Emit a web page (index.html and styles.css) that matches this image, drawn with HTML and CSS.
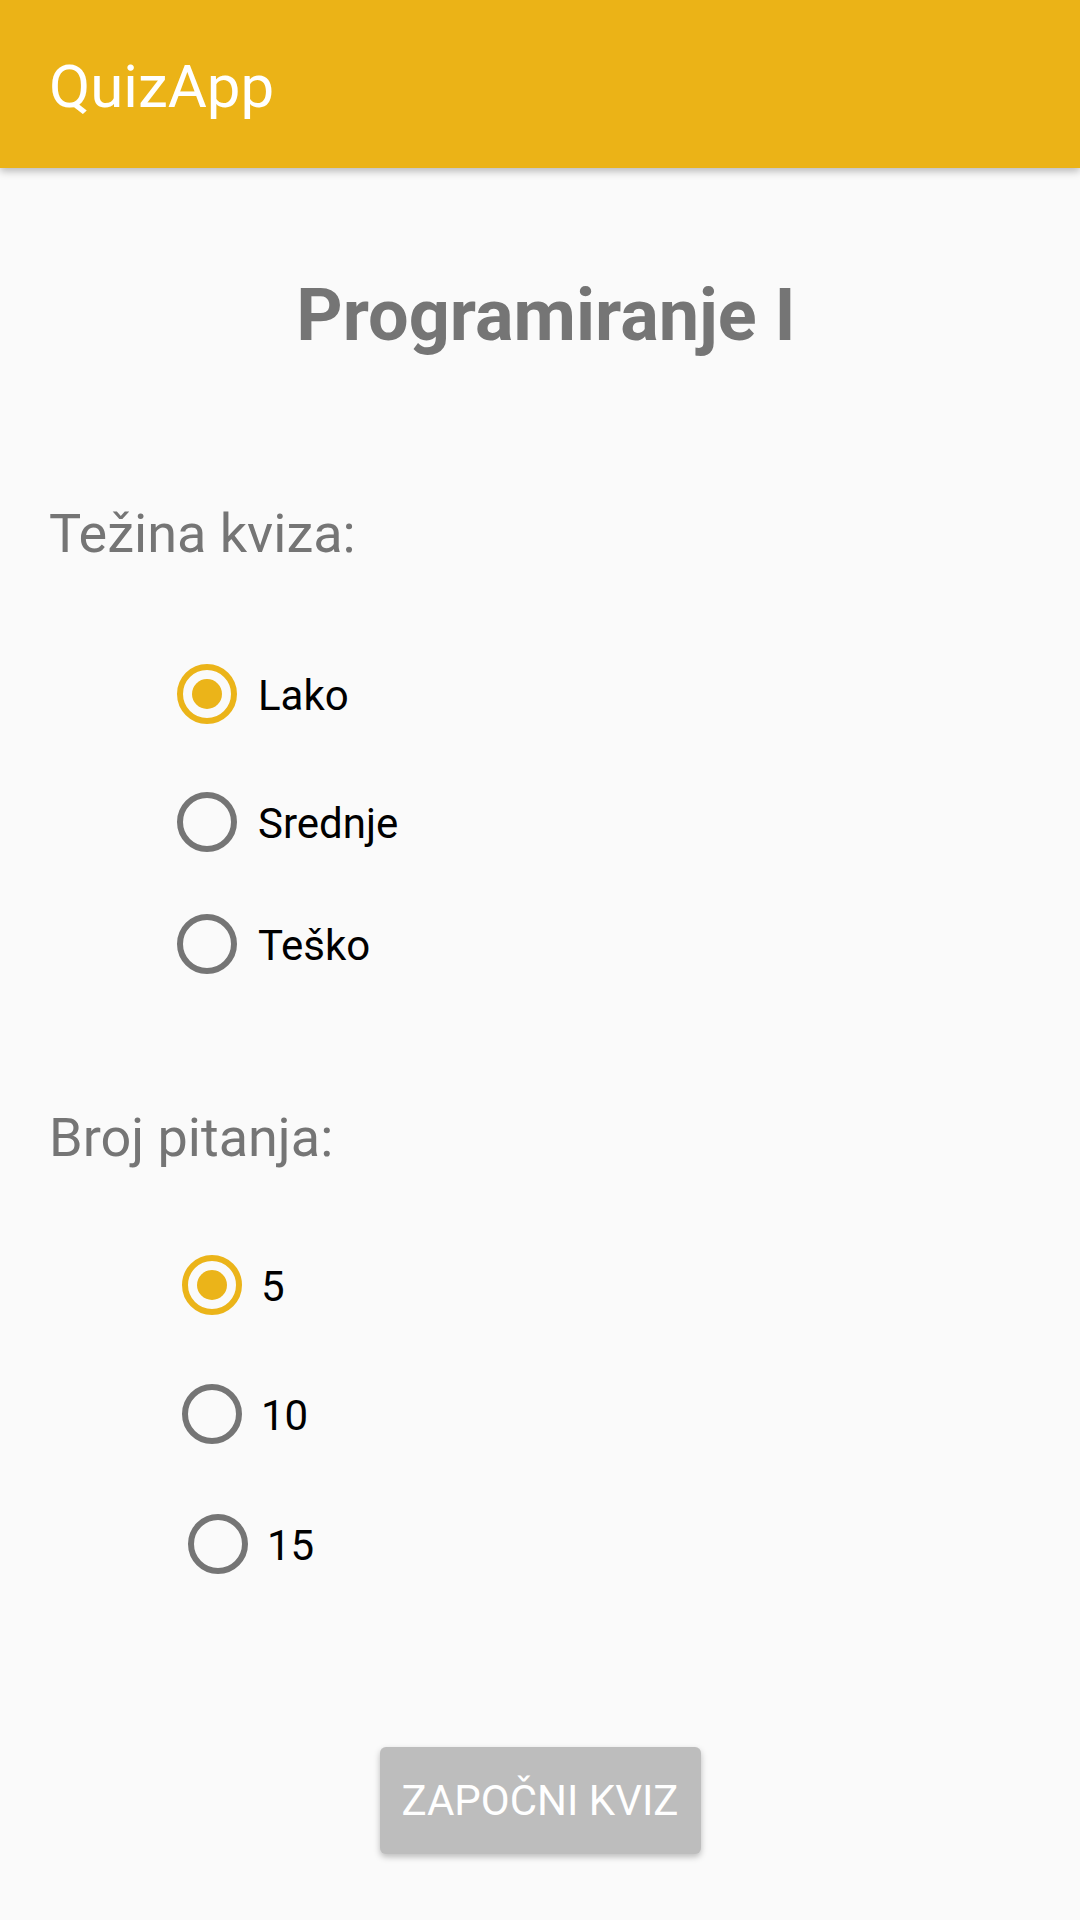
FILE: index.html
```html
<!DOCTYPE html>
<html lang="hr">
<head>
<meta charset="utf-8">
<title>QuizApp</title>
<link rel="stylesheet" href="styles.css">
</head>
<body>
<header class="appbar"><span class="appbar-title">QuizApp</span></header>
<main class="content">
  <h1 class="subject">Programiranje I</h1>
  <section class="group">
    <h2 class="label">Težina kviza:</h2>
    <div class="options options-difficulty">
      <label class="option"><span class="radio checked"></span><span class="option-text">Lako</span></label>
      <label class="option option-mid"><span class="radio"></span><span class="option-text">Srednje</span></label>
      <label class="option"><span class="radio"></span><span class="option-text">Teško</span></label>
    </div>
  </section>
  <section class="group group-count">
    <h2 class="label">Broj pitanja:</h2>
    <div class="options options-count">
      <label class="option"><span class="radio checked"></span><span class="option-text">5</span></label>
      <label class="option"><span class="radio"></span><span class="option-text">10</span></label>
      <label class="option option-shift"><span class="radio"></span><span class="option-text">15</span></label>
    </div>
  </section>
  <div class="actions"><button class="start" type="button">ZAPOČNI KVIZ</button></div>
</main>
</body>
</html>
```
FILE: styles.css
```css
* { box-sizing: border-box; }
html, body {
  margin: 0;
  padding: 0;
  background: #fafafa;
  font-family: Roboto, "Noto Sans", "Liberation Sans", sans-serif;
}
body { width: 1080px; height: 1920px; overflow: hidden; }

.appbar {
  height: 168px;
  background: #ebb317;
  display: flex;
  align-items: center;
  padding-left: 49px;
  padding-top: 5px;
  box-shadow: 0 3px 8px rgba(0, 0, 0, 0.28);
  position: relative;
  z-index: 1;
}
.appbar-title {
  color: #ffffff;
  font-size: 60px;
  font-weight: 400;
  line-height: 1;
}

.content {
  display: flex;
  flex-direction: column;
  padding-left: 49px;
}

.subject {
  margin: 98px 0 0 -49px;
  padding-left: 12px;
  font-size: 72px;
  font-weight: 700;
  line-height: 100px;
  color: #757575;
  text-align: center;
}

.group { display: flex; flex-direction: column; margin-top: 133px; }
.group-count { margin-top: 129px; }

.label {
  margin: 0;
  font-size: 54px;
  font-weight: 400;
  line-height: 70px;
  color: #757575;
}

.options {
  display: flex;
  flex-direction: column;
  gap: 65px;
  margin-top: 95px;
  padding-left: 128px;
}
.options-count { margin-top: 82px; gap: 69px; padding-left: 133px; }

.option {
  display: flex;
  align-items: center;
  height: 60px;
  gap: 21px;
}
.options-count .option { gap: 19px; }
.option-mid { margin-top: 3px; margin-bottom: -3px; }
.option-shift { margin-left: 6px; margin-top: 1px; }

.radio {
  width: 60px;
  height: 60px;
  flex: none;
  border: 6px solid #757575;
  border-radius: 50%;
  display: flex;
  align-items: center;
  justify-content: center;
}
.radio.checked { border-color: #ebb419; }
.radio.checked::after {
  content: "";
  width: 30px;
  height: 30px;
  border-radius: 50%;
  background: #ebb419;
}

.option-text {
  font-size: 42px;
  line-height: 60px;
  color: #000000;
  padding-top: 4px;
}

.actions {
  display: flex;
  justify-content: center;
  margin-top: 173px;
  margin-left: -49px;
}
.start {
  width: 321px;
  height: 107px;
  border: none;
  border-radius: 6px;
  background: #bdbdbd;
  color: #ffffff;
  font-family: Roboto, "Noto Sans", "Liberation Sans", sans-serif;
  font-size: 42px;
  font-weight: 400;
  padding: 0;
  box-shadow: 0 3px 6px rgba(0, 0, 0, 0.25);
}
```
